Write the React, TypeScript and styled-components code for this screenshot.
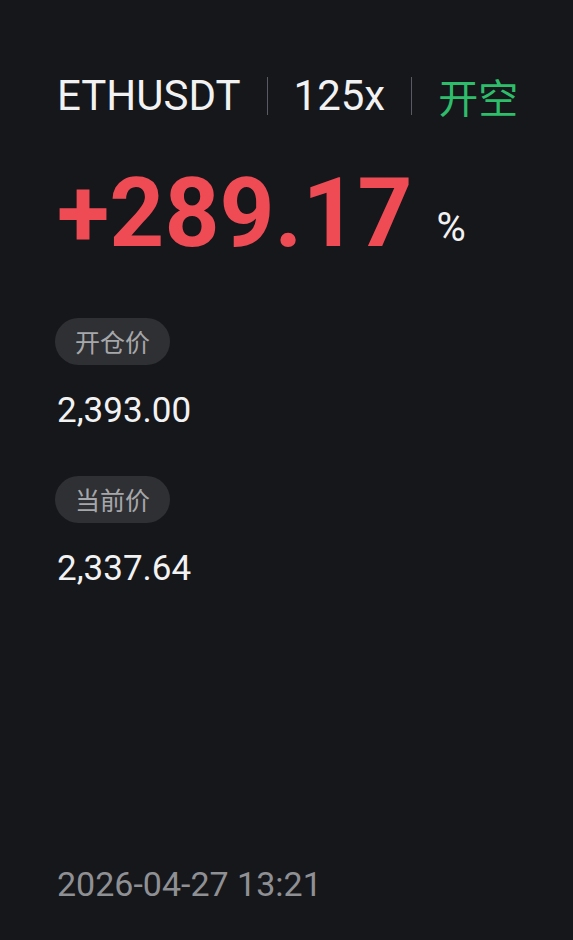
import styled, { createGlobalStyle } from 'styled-components';

const GlobalStyle = createGlobalStyle`
  html, body {
    margin: 0;
    padding: 0;
    background: #16171b;
  }
  body {
    font-family: Roboto, 'Noto Sans CJK SC', sans-serif;
  }
`;

const Card = styled.div`
  width: 573px;
  height: 940px;
  box-sizing: border-box;
  background: #16171b;
  padding: 72px 0 0 57px;
  display: flex;
  flex-direction: column;
  color: #f2f2f3;
`;

const Header = styled.div`
  display: flex;
  align-items: center;
  height: 48px;
`;

const HeaderText = styled.span<{ $green?: boolean }>`
  font-size: ${(p) => (p.$green ? 40 : 42)}px;
  line-height: 48px;
  color: ${(p) => (p.$green ? '#2ebd6b' : '#f2f2f3')};
  font-family: ${(p) =>
    p.$green ? "'Noto Sans CJK SC', sans-serif" : 'Roboto, sans-serif'};
`;

const Divider = styled.span`
  width: 1px;
  height: 38px;
  background: #5a5b60;
  margin: 0 26px;
`;

const Profit = styled.div`
  display: flex;
  align-items: flex-start;
  margin-top: 43px;
  height: 100px;
`;

const ProfitValue = styled.span`
  font-family: Roboto, sans-serif;
  font-weight: 700;
  font-size: 96px;
  line-height: 100px;
  color: #ef4b55;
`;

const ProfitUnit = styled.span`
  font-family: Roboto, sans-serif;
  font-size: 40px;
  line-height: 40px;
  color: #f2f2f3;
  margin: 45px 0 0 24px;
`;

const Field = styled.div<{ $top: number }>`
  display: flex;
  flex-direction: column;
  align-items: flex-start;
  margin-top: ${(p) => p.$top}px;
`;

const Pill = styled.span`
  height: 47px;
  padding: 0 20px;
  margin-left: -2px;
  border-radius: 24px;
  background: #2f3034;
  color: #a6a7aa;
  font-family: 'Noto Sans CJK SC', sans-serif;
  font-size: 25px;
  line-height: 47px;
`;

const Price = styled.span`
  margin-top: 26px;
  font-family: Roboto, sans-serif;
  font-size: 35px;
  line-height: 40px;
  color: #f2f2f3;
`;

const Time = styled.div`
  margin-top: auto;
  margin-bottom: 36px;
  font-family: Roboto, sans-serif;
  font-size: 34px;
  color: #8f9094;
`;

export default function App() {
  return (
    <>
      <GlobalStyle />
      <Card>
        <Header>
          <HeaderText>ETHUSDT</HeaderText>
          <Divider />
          <HeaderText>125x</HeaderText>
          <Divider />
          <HeaderText $green>开空</HeaderText>
        </Header>
        <Profit>
          <ProfitValue>+289.17</ProfitValue>
          <ProfitUnit>%</ProfitUnit>
        </Profit>
        <Field $top={55}>
          <Pill>开仓价</Pill>
          <Price>2,393.00</Price>
        </Field>
        <Field $top={45}>
          <Pill>当前价</Pill>
          <Price>2,337.64</Price>
        </Field>
        <Time>2026-04-27 13:21</Time>
      </Card>
    </>
  );
}
